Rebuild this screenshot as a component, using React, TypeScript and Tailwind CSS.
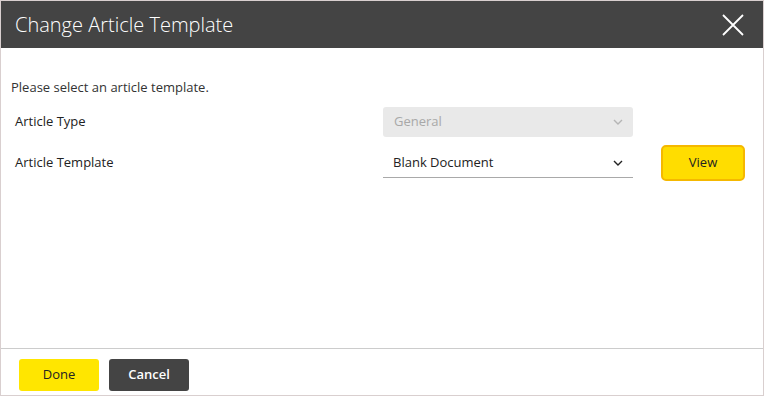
import React from "react";

const Chevron = ({ color }: { color: string }) => (
  <svg width="10" height="6" viewBox="0 0 10 6" fill="none">
    <path d="M1 1l4 4 4-4" stroke={color} strokeWidth="1.4" />
  </svg>
);

export default function App() {
  return (
    <div
      className="w-[764px] h-[396px] border border-[#d9cfcf] bg-white flex flex-col overflow-hidden"
      style={{ fontFamily: '"Open Sans", sans-serif' }}
    >
      <div className="h-[47px] bg-[#444444] flex items-center justify-between pl-[14px] pr-[19px] shrink-0">
        <span className="text-white text-[20px] font-light leading-none">Change Article Template</span>
        <svg width="22" height="22" viewBox="0 0 22 22">
          <path d="M1 1L21 21M21 1L1 21" stroke="white" strokeWidth="1.8" />
        </svg>
      </div>
      <div className="flex-1 px-[10px] pt-[30px]">
        <p className="text-[13px] leading-[18px] text-[#333]">Please select an article template.</p>
        <div className="mt-[11px] flex items-center h-[30px]">
          <div className="w-[372px] pl-[4px] text-[13px] text-[#222]">Article Type</div>
          <div className="w-[250px] h-[30px] bg-[#e9e9e9] rounded-[3px] flex items-center justify-between pl-[11px] pr-[10px]">
            <span className="text-[13px] text-[#a8a8a8]">General</span>
            <Chevron color="#b5b5b5" />
          </div>
        </div>
        <div className="mt-[8px] flex items-center h-[36px]">
          <div className="w-[372px] pl-[4px] text-[13px] text-[#222]">Article Template</div>
          <div className="w-[250px] h-[30px] border-b border-[#a9a9a9] flex items-center justify-between pl-[10px] pr-[10px]">
            <span className="text-[13px] text-[#222]">Blank Document</span>
            <Chevron color="#222" />
          </div>
          <button className="ml-[28px] w-[84px] h-[36px] bg-[#ffdd00] border-2 border-[#f5b800] rounded-[5px] text-[13px] text-[#222]">
            View
          </button>
        </div>
      </div>
      <div className="h-[47px] border-t border-[#cccccc] shrink-0 flex items-start pt-[10px] pl-[18px] gap-[10px]">
        <button className="w-[80px] h-[32px] bg-[#ffe600] rounded-[3px] text-[13px] text-[#222]">Done</button>
        <button className="w-[80px] h-[32px] bg-[#444444] rounded-[3px] text-[13px] text-white font-semibold">
          Cancel
        </button>
      </div>
    </div>
  );
}
